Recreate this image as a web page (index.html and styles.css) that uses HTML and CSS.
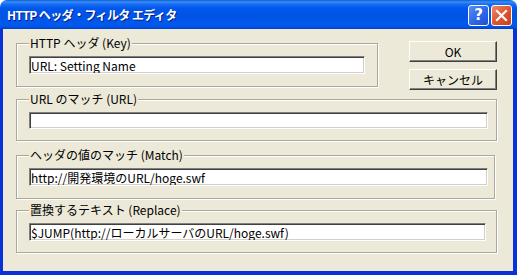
FILE: index.html
```html
<!DOCTYPE html>
<html lang="ja">
  <head>
    <meta charset="UTF-8" />
    <title>HTTP ヘッダ・フィルタ エディタ</title>
    <link rel="stylesheet" href="styles.css">
  </head>
  <body>
    <div class="window">
      <div class="titlebar">
        <span class="title">HTTP ヘッダ・フィルタ エディタ</span>
        <div class="caption-buttons">
          <span class="cap help">?</span>
          <span class="cap close">
            <svg width="13" height="13" viewBox="0 0 13 13">
              <path d="M2 2 L11 11 M11 2 L2 11" stroke="#fff" stroke-width="2.2" stroke-linecap="square" />
            </svg>
          </span>
        </div>
      </div>
      <div class="frame">
        <div class="client">
          <div class="top-row">
            <div class="group g1">
              <span class="legend">HTTP ヘッダ (Key)</span>
              <input class="edit e1" type="text" value="URL: Setting Name" />
            </div>
            <div class="buttons">
              <button class="btn">OK</button>
              <button class="btn">キャンセル</button>
            </div>
          </div>

          <div class="group g2">
            <span class="legend">URL のマッチ (URL)</span>
            <input class="edit e2" type="text" value="" />
          </div>

          <div class="group g3">
            <span class="legend">ヘッダの値のマッチ (Match)</span>
            <input class="edit e3" type="text" value="http://開発環境のURL/hoge.swf" />
          </div>

          <div class="group g4">
            <span class="legend">置換するテキスト (Replace)</span>
            <input class="edit e4" type="text" value="$JUMP(http://ローカルサーバのURL/hoge.swf)" />
          </div>
        </div>
      </div>
    </div>
  </body>
</html>
```

FILE: styles.css
```css
* {
  margin: 0;
  padding: 0;
  box-sizing: border-box;
}
body {
  background: #fff;
  font-family: "Noto Sans CJK JP", "Liberation Sans", sans-serif;
  font-size: 12px;
  color: #000;
}

.window {
  width: 517px;
  height: 275px;
  display: flex;
  flex-direction: column;
}

.titlebar {
  height: 29px;
  flex: none;
  display: flex;
  align-items: flex-start;
  justify-content: space-between;
  border-radius: 7px 7px 0 0;
  background: linear-gradient(
    to bottom,
    #0a5fd8 0,
    #3b8cf5 2px,
    #1a6ef2 4px,
    #0058ee 8px,
    #0054e3 16px,
    #0058ee 24px,
    #0053e6 27px,
    #0040c8 29px
  );
}
.title {
  margin: 7px 0 0 7px;
  color: #fff;
  font-weight: bold;
  font-size: 12px;
  line-height: 16px;
  letter-spacing: -0.6px;
  text-shadow: 1px 1px 0 #0a1e8a;
}
.caption-buttons {
  display: flex;
  gap: 2px;
  margin: 5px 5px 0 0;
}
.cap {
  width: 21px;
  height: 21px;
  border: 1px solid #fff;
  border-radius: 3px;
  display: flex;
  align-items: center;
  justify-content: center;
}
.help {
  background: linear-gradient(135deg, #5a8ef5 0, #2f6ae8 50%, #1d4fd6 100%);
  color: #fff;
  font-family: "DejaVu Sans", sans-serif;
  font-weight: bold;
  font-size: 15px;
  line-height: 19px;
}
.close {
  background: linear-gradient(135deg, #f08a68 0, #e1542e 50%, #c8401f 100%);
}

.frame {
  flex: 1;
  display: flex;
  border-left: 3px solid #0831d9;
  border-right: 4px solid #0831d9;
  border-bottom: 4px solid #0831d9;
}
.client {
  flex: 1;
  background: #ece9d8;
  padding: 12px 16px 0 13px;
  display: flex;
  flex-direction: column;
}

.top-row {
  display: flex;
  justify-content: space-between;
  align-items: flex-start;
}

.group {
  position: relative;
  border: 1px solid #aca899;
  box-shadow: 1px 1px 0 #fff, inset 1px 1px 0 #fff;
  padding: 12px 0 0 12px;
}
.g1 {
  width: 362px;
  height: 44px;
  margin-top: 2px;
}
.g2 {
  width: 481px;
  height: 42px;
  margin-top: 9px;
}
.g3 {
  width: 479px;
  height: 44px;
  margin-top: 14px;
}
.g4 {
  width: 481px;
  height: 43px;
  margin-top: 11px;
}

.legend {
  position: absolute;
  top: -7px;
  left: 12px;
  padding: 0 1px;
  background: #ece9d8;
  line-height: 12px;
  white-space: nowrap;
}

.edit {
  display: block;
  height: 18px;
  padding: 0 1px;
  font-family: inherit;
  font-size: 12px;
  line-height: 14px;
  color: #000;
  background: #fff;
  border: 1px solid;
  border-color: #808080 #fff #fff #808080;
  box-shadow: inset 1px 1px 0 #404040, inset -1px -1px 0 #d4d0c8;
  outline: none;
}
.e1 {
  width: 336px;
}
.e2 {
  width: 459px;
  height: 17px;
}
.e3 {
  width: 459px;
}
.e4 {
  width: 457px;
}

.buttons {
  display: flex;
  flex-direction: column;
  gap: 7px;
}
.btn {
  width: 88px;
  height: 21px;
  font-family: inherit;
  font-size: 12px;
  color: #000;
  background: #ece9d8;
  border: 1px solid;
  border-color: #fff #404040 #404040 #fff;
  box-shadow: inset -1px -1px 0 #808080;
}
```
